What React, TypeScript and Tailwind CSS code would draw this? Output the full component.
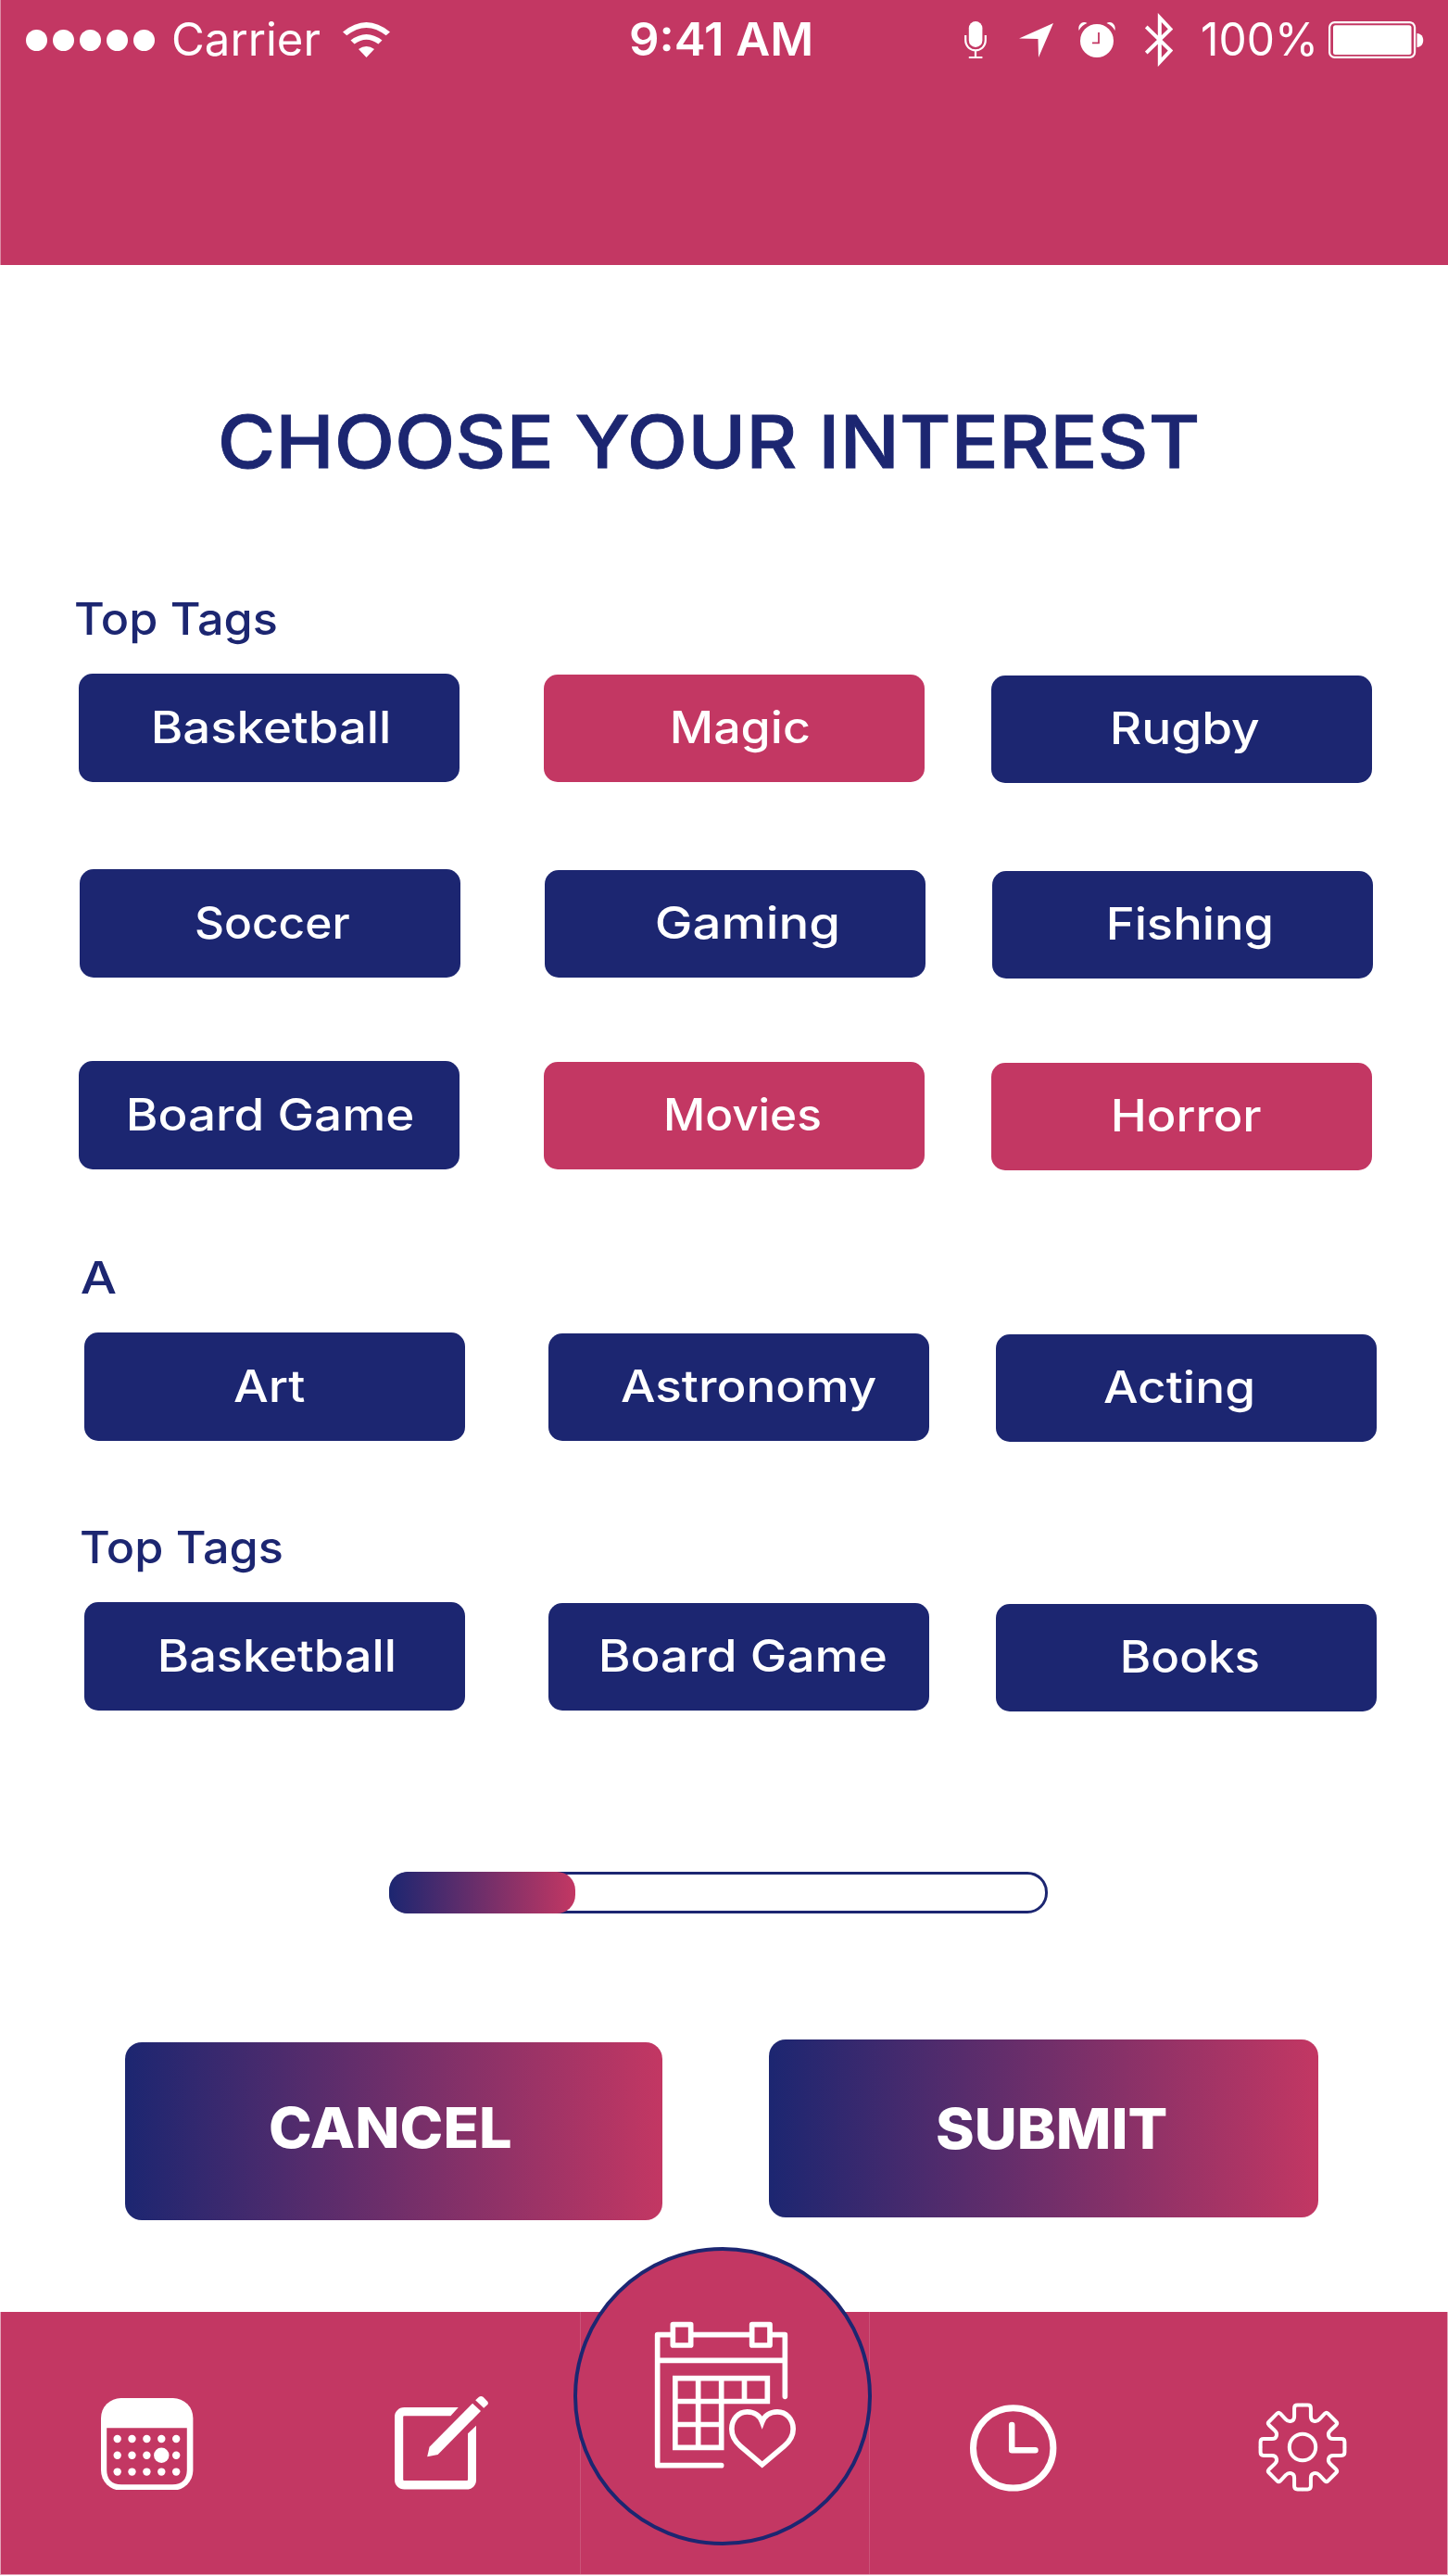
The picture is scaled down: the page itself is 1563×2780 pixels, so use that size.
import { useLayoutEffect, useRef, useState } from "react";

/* Text whose visible glyphs are fitted to a given width. */
function FitText({ text, width, className }: { text: string; width: number; className: string }) {
  const ref = useRef<HTMLSpanElement>(null);
  const [transform, setTransform] = useState("none");

  useLayoutEffect(() => {
    const el = ref.current;
    const ctx = document.createElement("canvas").getContext("2d");
    if (!el || !ctx) return;
    const cs = getComputedStyle(el);
    ctx.font = `${cs.fontWeight} ${cs.fontSize} ${cs.fontFamily}`;
    const m = ctx.measureText(text);
    const scale = width / (m.actualBoundingBoxLeft + m.actualBoundingBoxRight);
    setTransform(`translateX(${m.actualBoundingBoxLeft * scale}px) scaleX(${scale})`);
  }, [text, width]);

  return (
    <span className="block shrink-0 text-left" style={{ width }}>
      <span ref={ref} className={`inline-block origin-left whitespace-nowrap ${className}`} style={{ transform }}>
        {text}
      </span>
    </span>
  );
}

type Tag = { label: string; inset: number; width: number; active?: boolean };

function TagButton({ tag, className }: { tag: Tag; className: string }) {
  return (
    <button
      className={`flex h-[116.6px] w-[411px] shrink-0 items-center rounded-[15px] pb-[1.6px] text-white ${
        tag.active ? "bg-[#c33763]" : "bg-[#1c2671]"
      } ${className}`}
      style={{ paddingLeft: tag.inset }}
    >
      <FitText text={tag.label} width={tag.width} className="text-[48px] leading-[60px] font-medium" />
    </button>
  );
}

function TagRow({ tags, className }: { tags: [Tag, Tag, Tag]; className: string }) {
  return (
    <div className={`flex h-[117px] items-start ${className}`}>
      <TagButton tag={tags[0]} className="" />
      <TagButton tag={tags[1]} className="mt-[0.8px] ml-[90.5px]" />
      <TagButton tag={tags[2]} className="mt-[1.8px] ml-[72.3px]" />
    </div>
  );
}

function SectionTitle({ text, width, className }: { text: string; width: number; className: string }) {
  return (
    <h2 className={`h-[60px] text-[#1c2671] ${className}`}>
      <FitText text={text} width={width} className="text-[48px] leading-[60px] font-medium" />
    </h2>
  );
}

function StatusBar() {
  return (
    <div className="flex h-[86px] items-center text-white">
      <div className="ml-[26.5px] flex gap-[5.6px] pt-px">
        {[0, 1, 2, 3, 4].map((i) => (
          <span key={i} className="size-[23.5px] rounded-full bg-white" />
        ))}
      </div>
      <div className="ml-[19.500px]">
        <FitText text="Carrier" width={158.5} className="text-[49px] leading-[84px] font-normal" />
      </div>
      <svg className="ml-[25px] h-[38px] w-[51px]" viewBox="0 0 51 38" fill="white">
        <path d="M0 10.5 Q25.500 -10.500 51 10.500 L46.700 14.300 Q25.500 -2.500 4.300 14.300Z" />
        <path d="M8.500 19.500 Q25.500 6.500 42.500 19.500 L38.400 23.500 Q25.500 14 12.600 23.500Z" />
        <path d="M17 29 Q25.500 23 34 29 L25.500 38Z" />
      </svg>
      <div className="ml-[260px]">
        <FitText text="9:41 AM" width={194} className="text-[49px] leading-[84px] font-semibold" />
      </div>
      <svg className="ml-[166px] h-[40px] w-[24px]" viewBox="0 0 24 40" fill="none" stroke="white" strokeWidth="2.2">
        <rect x="4.800" y="0" width="14.600" height="28" rx="7.300" fill="white" stroke="none" />
        <path d="M1.200 15V20C1.200 35 22.800 35 22.800 20V15M12 31V39M4.800 39H19.400" />
      </svg>
      <svg className="ml-[35px] h-[37px] w-[37px]" viewBox="0 0 37 37" fill="white">
        <path d="M37 0 L21 37 L20.500 17 L0 16.500Z" />
      </svg>
      <svg className="ml-[27px] h-[38px] w-[40px]" viewBox="0 0 40 38">
        <circle cx="20" cy="20" r="18" fill="white" />
        <path d="M.600 9C-1 2 5 -2 9.500 1C6 2.500 2.500 5 .600 9ZM39.400 9C41 2 35 -2 30.500 1C34 2.500 37.500 5 39.400 9Z" fill="white" />
        <path d="M22 11V22.300H15" fill="none" stroke="#c33763" strokeWidth="1.800" />
      </svg>
      <svg className="ml-[32px] h-[58px] w-[30px]" viewBox="0 0 30 58" fill="none" stroke="white" strokeWidth="4">
        <path d="M1.200 15 L27.500 40.500 L15.800 53 V5 L27.500 17.500 L1.200 43" />
      </svg>
      <div className="ml-[32px]">
        <FitText text="100%" width={120} className="text-[49px] leading-[84px] font-normal" />
      </div>
      <svg className="ml-[16px] h-[40px] w-[103px]" viewBox="0 0 103 40">
        <rect x="1.100" y="1.100" width="92" height="37.800" rx="5.500" fill="none" stroke="white" strokeWidth="2.200" />
        <rect x="5" y="4.200" width="84.500" height="31.800" rx="2.500" fill="white" />
        <path d="M95.500 13C104.500 13 104.500 28 95.500 28Z" fill="white" />
      </svg>
    </div>
  );
}

function CalendarIcon() {
  return (
    <svg className="h-[99.6px] w-[99.4px]" viewBox="0 0 99.4 99.6">
      <rect width="99.400" height="99.600" rx="21.500" fill="white" />
      <path d="M6.200 32.300H92.800V77Q92.800 93.300 77 93.300H22Q6.200 93.300 6.200 77Z" fill="#c33763" />
      {[44, 61.8, 79.6].map((cy) =>
        [17.7, 33.5, 49.4, 65.3, 81.2].map((cx) => (
          <circle key={`${cx}-${cy}`} cx={cx} cy={cy} r={cx === 65.3 && cy === 61.8 ? 8.2 : 4.2} fill="white" />
        )),
      )}
    </svg>
  );
}

function ComposeIcon() {
  return (
    <svg className="h-[101px] w-[101px]" viewBox="0 0 101 101" fill="white">
      <path d="M68.800 12H10.500C4 12 0 17 0 22V90.500C0 96 4.500 100.500 10.500 100.500H78C84 100.500 88 96 88 90.500V31.700L79 40.300V90Q79 91 78 91H10.200Q9.200 91 9.200 90V22.300Q9.200 21.300 10.200 21.300H60.400Z" />
      <path d="M35.200 65.300L37.500 54.700L84.100 7.700L93 16L46.600 63Z" />
      <path d="M87.200 4.300L91 .700Q93.200 -.700 95.500 .800L100.300 5.700Q101.500 7.500 100.300 9L96.200 12.700Z" />
    </svg>
  );
}

function CalendarHeartIcon() {
  return (
    <svg className="h-[170px] w-[160px]" viewBox="300 270 480 510" fill="none" stroke="white" strokeWidth="17">
      <path
        strokeLinecap="round"
        strokeLinejoin="round"
        d="M742 529V329H700M627 329H445M371 329H329V752H536M329 412H742M379 296H437V363H379ZM635 296H693V363H635Z"
      />
      <path d="M386.500 470H685V544.500H386.500M386.500 461.500V694H536V470M461 470V694M610.500 470V544M386.500 619.500H536" />
      <path
        strokeMiterlimit="10"
        d="M668 749.500L740 689C759 673 768.500 655 768.500 634C768.500 602 746 578.500 717 578.500C693 578.500 675 592 668 611C661 592 643 578.500 620 578.500C591 578.500 569.500 602 569.500 634C569.500 655 580 674 597 689Z"
      />
    </svg>
  );
}

function ClockIcon() {
  return (
    <svg className="h-[94px] w-[94px]" viewBox="0 0 94 94" fill="none" stroke="white">
      <circle cx="46.700" cy="46.900" r="43.200" strokeWidth="7" />
      <path d="M45.200 22V49.300H70.500" strokeWidth="6.500" strokeLinecap="round" strokeLinejoin="round" />
    </svg>
  );
}

function GearIcon() {
  return (
    <svg className="h-[96px] w-[96px]" viewBox="-48 -48 96 96" fill="none" stroke="white" strokeWidth="4">
      {[0, 90, 180, 270].map((angle) => (
        <path
          key={angle}
          transform={`rotate(${angle})`}
          d="M-.200 -45.400H5.500Q8.900 -45.400 8.900 -42V-33C8.900 -27.500 15 -26.500 18 -30L24 -36.300Q25.800 -38 27.500 -36.300L36.300 -27.500Q38 -25.800 36.300 -24L30 -18C26.500 -15 27.500 -8.900 33 -8.900H42Q45.400 -8.900 45.400 -5.500V.200"
        />
      ))}
      <circle r="14.200" />
    </svg>
  );
}

export default function App() {
  return (
    <div className="flex h-[2780px] w-[1563px] flex-col overflow-hidden bg-white font-['Inter',sans-serif]">
      <header className="h-[286px] shrink-0 border-l border-[#dc8ba5] bg-[#c33763]">
        <StatusBar />
      </header>

      <main className="h-[2209px] shrink-0">
        <h1 className="mt-[150px] ml-[239px] h-[80px] text-[#1c2671]">
          <FitText
            text="CHOOSE YOUR INTEREST"
            width={1053.5}
            className="text-[79px] leading-[80px] font-medium [-webkit-text-stroke:0.8px_#1c2671]"
          />
        </h1>

        <SectionTitle text="Top Tags" width={216} className="mt-[122px] ml-[82px]" />
        <TagRow
          className="mt-[29px] ml-[85px]"
          tags={[
            { label: "Basketball", inset: 81, width: 253 },
            { label: "Magic", inset: 139, width: 147, active: true },
            { label: "Rugby", inset: 131.5, width: 158 },
          ]}
        />
        <TagRow
          className="mt-[94px] ml-[86px]"
          tags={[
            { label: "Soccer", inset: 125.5, width: 165 },
            { label: "Gaming", inset: 121.5, width: 195 },
            { label: "Fishing", inset: 126.5, width: 175 },
          ]}
        />
        <TagRow
          className="mt-[90px] ml-[85px]"
          tags={[
            { label: "Board Game", inset: 54, width: 307 },
            { label: "Movies", inset: 132.5, width: 166, active: true },
            { label: "Horror", inset: 132.5, width: 159, active: true },
          ]}
        />

        <SectionTitle text="A" width={37} className="mt-[87px] ml-[88px]" />
        <TagRow
          className="mt-[29px] ml-[90.5px]"
          tags={[
            { label: "Art", inset: 162, width: 76 },
            { label: "Astronomy", inset: 78.5, width: 274.5 },
            { label: "Acting", inset: 116.5, width: 160 },
          ]}
        />

        <SectionTitle text="Top Tags" width={216} className="mt-[85px] ml-[88px]" />
        <TagRow
          className="mt-[29px] ml-[90.5px]"
          tags={[
            { label: "Basketball", inset: 82.5, width: 251.5 },
            { label: "Board Game", inset: 56.5, width: 307.5 },
            { label: "Books", inset: 137, width: 146 },
          ]}
        />

        <div className="mt-[174px] ml-[419.5px] h-[45px] w-[711.5px] rounded-[22px] border-[3px] border-[#1c2671]">
          <div className="-mt-[3px] -ml-[3px] h-[45px] w-[201px] rounded-[20px] bg-[linear-gradient(to_right,#1c2671,#c33763)]" />
        </div>

        <div className="mt-[136px] flex items-start">
          <button className="mt-[3px] ml-[135px] flex h-[192px] w-[580px] items-center rounded-[18px] bg-[linear-gradient(to_right,#1c2671,#c33763)] pb-[8px] pl-[157px] text-white">
            <FitText text="CANCEL" width={259} className="text-[61px] leading-[80px] font-extrabold" />
          </button>
          <button className="ml-[115px] flex h-[192px] w-[592.5px] items-center rounded-[18px] bg-[linear-gradient(to_right,#1c2671,#c33763)] pl-[181.5px] text-white">
            <FitText text="SUBMIT" width={247} className="text-[61px] leading-[80px] font-extrabold" />
          </button>
        </div>
      </main>

      <nav className="relative grid h-[284px] shrink-0 grid-cols-[313px_312px_313px_312px_1fr] border-x border-b border-[#e3a5b9] bg-[#c33763]">
        <a className="pt-[92.7px] pl-[108.4px]">
          <CalendarIcon />
        </a>
        <a className="pt-[91px] pl-[112px]">
          <ComposeIcon />
        </a>
        <a className="border-x border-[#cb5479]" />
        <a className="pt-[100px] pl-[108px]">
          <ClockIcon />
        </a>
        <a className="pt-[97.7px] pl-[106.7px]">
          <GearIcon />
        </a>
        <a className="absolute -top-[70px] left-[618px] size-[322px] rounded-full border-4 border-[#1c2671] bg-[#c33763] pt-[71px] pl-[77px]">
          <CalendarHeartIcon />
        </a>
      </nav>
    </div>
  );
}
